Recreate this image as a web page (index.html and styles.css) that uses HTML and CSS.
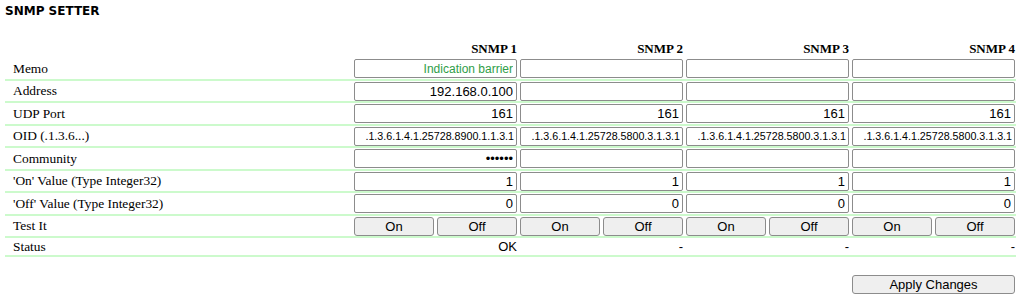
FILE: index.html
```html
<!DOCTYPE html>
<html>
<head>
<meta charset="utf-8">
<title>SNMP Setter</title>
<link rel="stylesheet" href="styles.css">
</head>
<body>
<h1 class="title">SNMP SETTER</h1>
<table class="grid">
  <colgroup>
    <col class="c-label"><col class="c-snmp"><col class="c-snmp"><col class="c-snmp"><col class="c-last">
  </colgroup>
  <thead>
    <tr><th></th><th>SNMP 1</th><th>SNMP 2</th><th>SNMP 3</th><th>SNMP 4</th></tr>
  </thead>
  <tbody>
    <tr>
      <td class="label">Memo</td>
      <td><input class="field memo" value="Indication barrier"></td>
      <td><input class="field memo" value=""></td>
      <td><input class="field memo" value=""></td>
      <td><input class="field memo" value=""></td>
    </tr>
    <tr>
      <td class="label">Address</td>
      <td><input class="field" value="192.168.0.100"></td>
      <td><input class="field" value=""></td>
      <td><input class="field" value=""></td>
      <td><input class="field" value=""></td>
    </tr>
    <tr>
      <td class="label">UDP Port</td>
      <td><input class="field" value="161"></td>
      <td><input class="field" value="161"></td>
      <td><input class="field" value="161"></td>
      <td><input class="field" value="161"></td>
    </tr>
    <tr>
      <td class="label">OID (.1.3.6...)</td>
      <td><input class="field oid" value=".1.3.6.1.4.1.25728.8900.1.1.3.1"></td>
      <td><input class="field oid" value=".1.3.6.1.4.1.25728.5800.3.1.3.1"></td>
      <td><input class="field oid" value=".1.3.6.1.4.1.25728.5800.3.1.3.1"></td>
      <td><input class="field oid" value=".1.3.6.1.4.1.25728.5800.3.1.3.1"></td>
    </tr>
    <tr>
      <td class="label">Community</td>
      <td><input class="field" type="password" value="public"></td>
      <td><input class="field" type="password" value=""></td>
      <td><input class="field" type="password" value=""></td>
      <td><input class="field" type="password" value=""></td>
    </tr>
    <tr>
      <td class="label">'On' Value (Type Integer32)</td>
      <td><input class="field" value="1"></td>
      <td><input class="field" value="1"></td>
      <td><input class="field" value="1"></td>
      <td><input class="field" value="1"></td>
    </tr>
    <tr>
      <td class="label">'Off' Value (Type Integer32)</td>
      <td><input class="field" value="0"></td>
      <td><input class="field" value="0"></td>
      <td><input class="field" value="0"></td>
      <td><input class="field" value="0"></td>
    </tr>
    <tr>
      <td class="label">Test It</td>
      <td><div class="pair"><button class="btn">On</button><button class="btn">Off</button></div></td>
      <td><div class="pair"><button class="btn">On</button><button class="btn">Off</button></div></td>
      <td><div class="pair"><button class="btn">On</button><button class="btn">Off</button></div></td>
      <td><div class="pair"><button class="btn">On</button><button class="btn">Off</button></div></td>
    </tr>
    <tr class="status-row">
      <td class="label">Status</td>
      <td class="status">OK</td>
      <td class="status">-</td>
      <td class="status">-</td>
      <td class="status">-</td>
    </tr>
  </tbody>
</table>
<div class="actions">
  <button class="btn apply">Apply Changes</button>
</div>
</body>
</html>
```

FILE: styles.css
```css
html, body {
  margin: 0;
  padding: 0;
  background: #ffffff;
}

.title {
  margin: 0;
  padding: 4px 0 0 5px;
  font-family: "DejaVu Sans", Verdana, sans-serif;
  font-weight: bold;
  font-size: 12px;
  line-height: 14px;
  color: #000;
}

.grid {
  margin: 23px 0 0 5px;
  width: 1011px;
  table-layout: fixed;
  border-collapse: collapse;
  border-spacing: 0;
}

.c-label { width: 349px; }
.c-snmp { width: 166px; }
.c-last { width: 164px; }

.grid th {
  font-family: "Liberation Serif", "Times New Roman", serif;
  font-weight: bold;
  font-size: 13px;
  line-height: 15px;
  text-align: right;
  padding: 0 3px 2px 0;
  color: #000;
}

.grid th:last-child {
  padding-right: 1px;
}

.grid td {
  padding: 1px 3px 0.5px 0;
  border-bottom: 2px solid #ccfacc;
  vertical-align: middle;
}

.grid td:last-child {
  padding-right: 1px;
}

.grid td.label {
  padding-left: 8px;
  font-family: "Liberation Serif", "Times New Roman", serif;
  font-size: 13.4px;
  color: #000;
  white-space: nowrap;
}

.field {
  display: block;
  box-sizing: border-box;
  width: 100%;
  height: 19px;
  margin: 0;
  padding: 0 3px 0 2px;
  border: 1px solid #8c8c8c;
  border-radius: 2px;
  background: #fff;
  font-family: "Liberation Sans", Arial, sans-serif;
  font-size: 13px;
  color: #000;
  text-align: right;
  outline: none;
}

.field.memo {
  font-size: 12px;
  color: #2f9e48;
}

.field.oid {
  font-size: 10.7px;
  padding-right: 2px;
}

.pair {
  display: flex;
  gap: 3px;
}

.btn {
  box-sizing: border-box;
  height: 19px;
  margin: 0;
  padding: 0;
  border: 1px solid #8c8c8c;
  border-radius: 3px;
  background: #efefef;
  font-family: "Liberation Sans", Arial, sans-serif;
  font-size: 13px;
  line-height: 17px;
  color: #000;
}

.pair .btn {
  flex: 1 1 0;
}

.status-row td {
  height: 17px;
  padding-top: 0;
  padding-bottom: 0;
}

.grid td.status {
  font-family: "Liberation Sans", Arial, sans-serif;
  font-size: 13px;
  text-align: right;
  color: #000;
}

.actions {
  display: flex;
  justify-content: flex-end;
  width: 1010px;
  margin: 18px 0 0 5px;
}

.apply {
  width: 163px;
}
```
